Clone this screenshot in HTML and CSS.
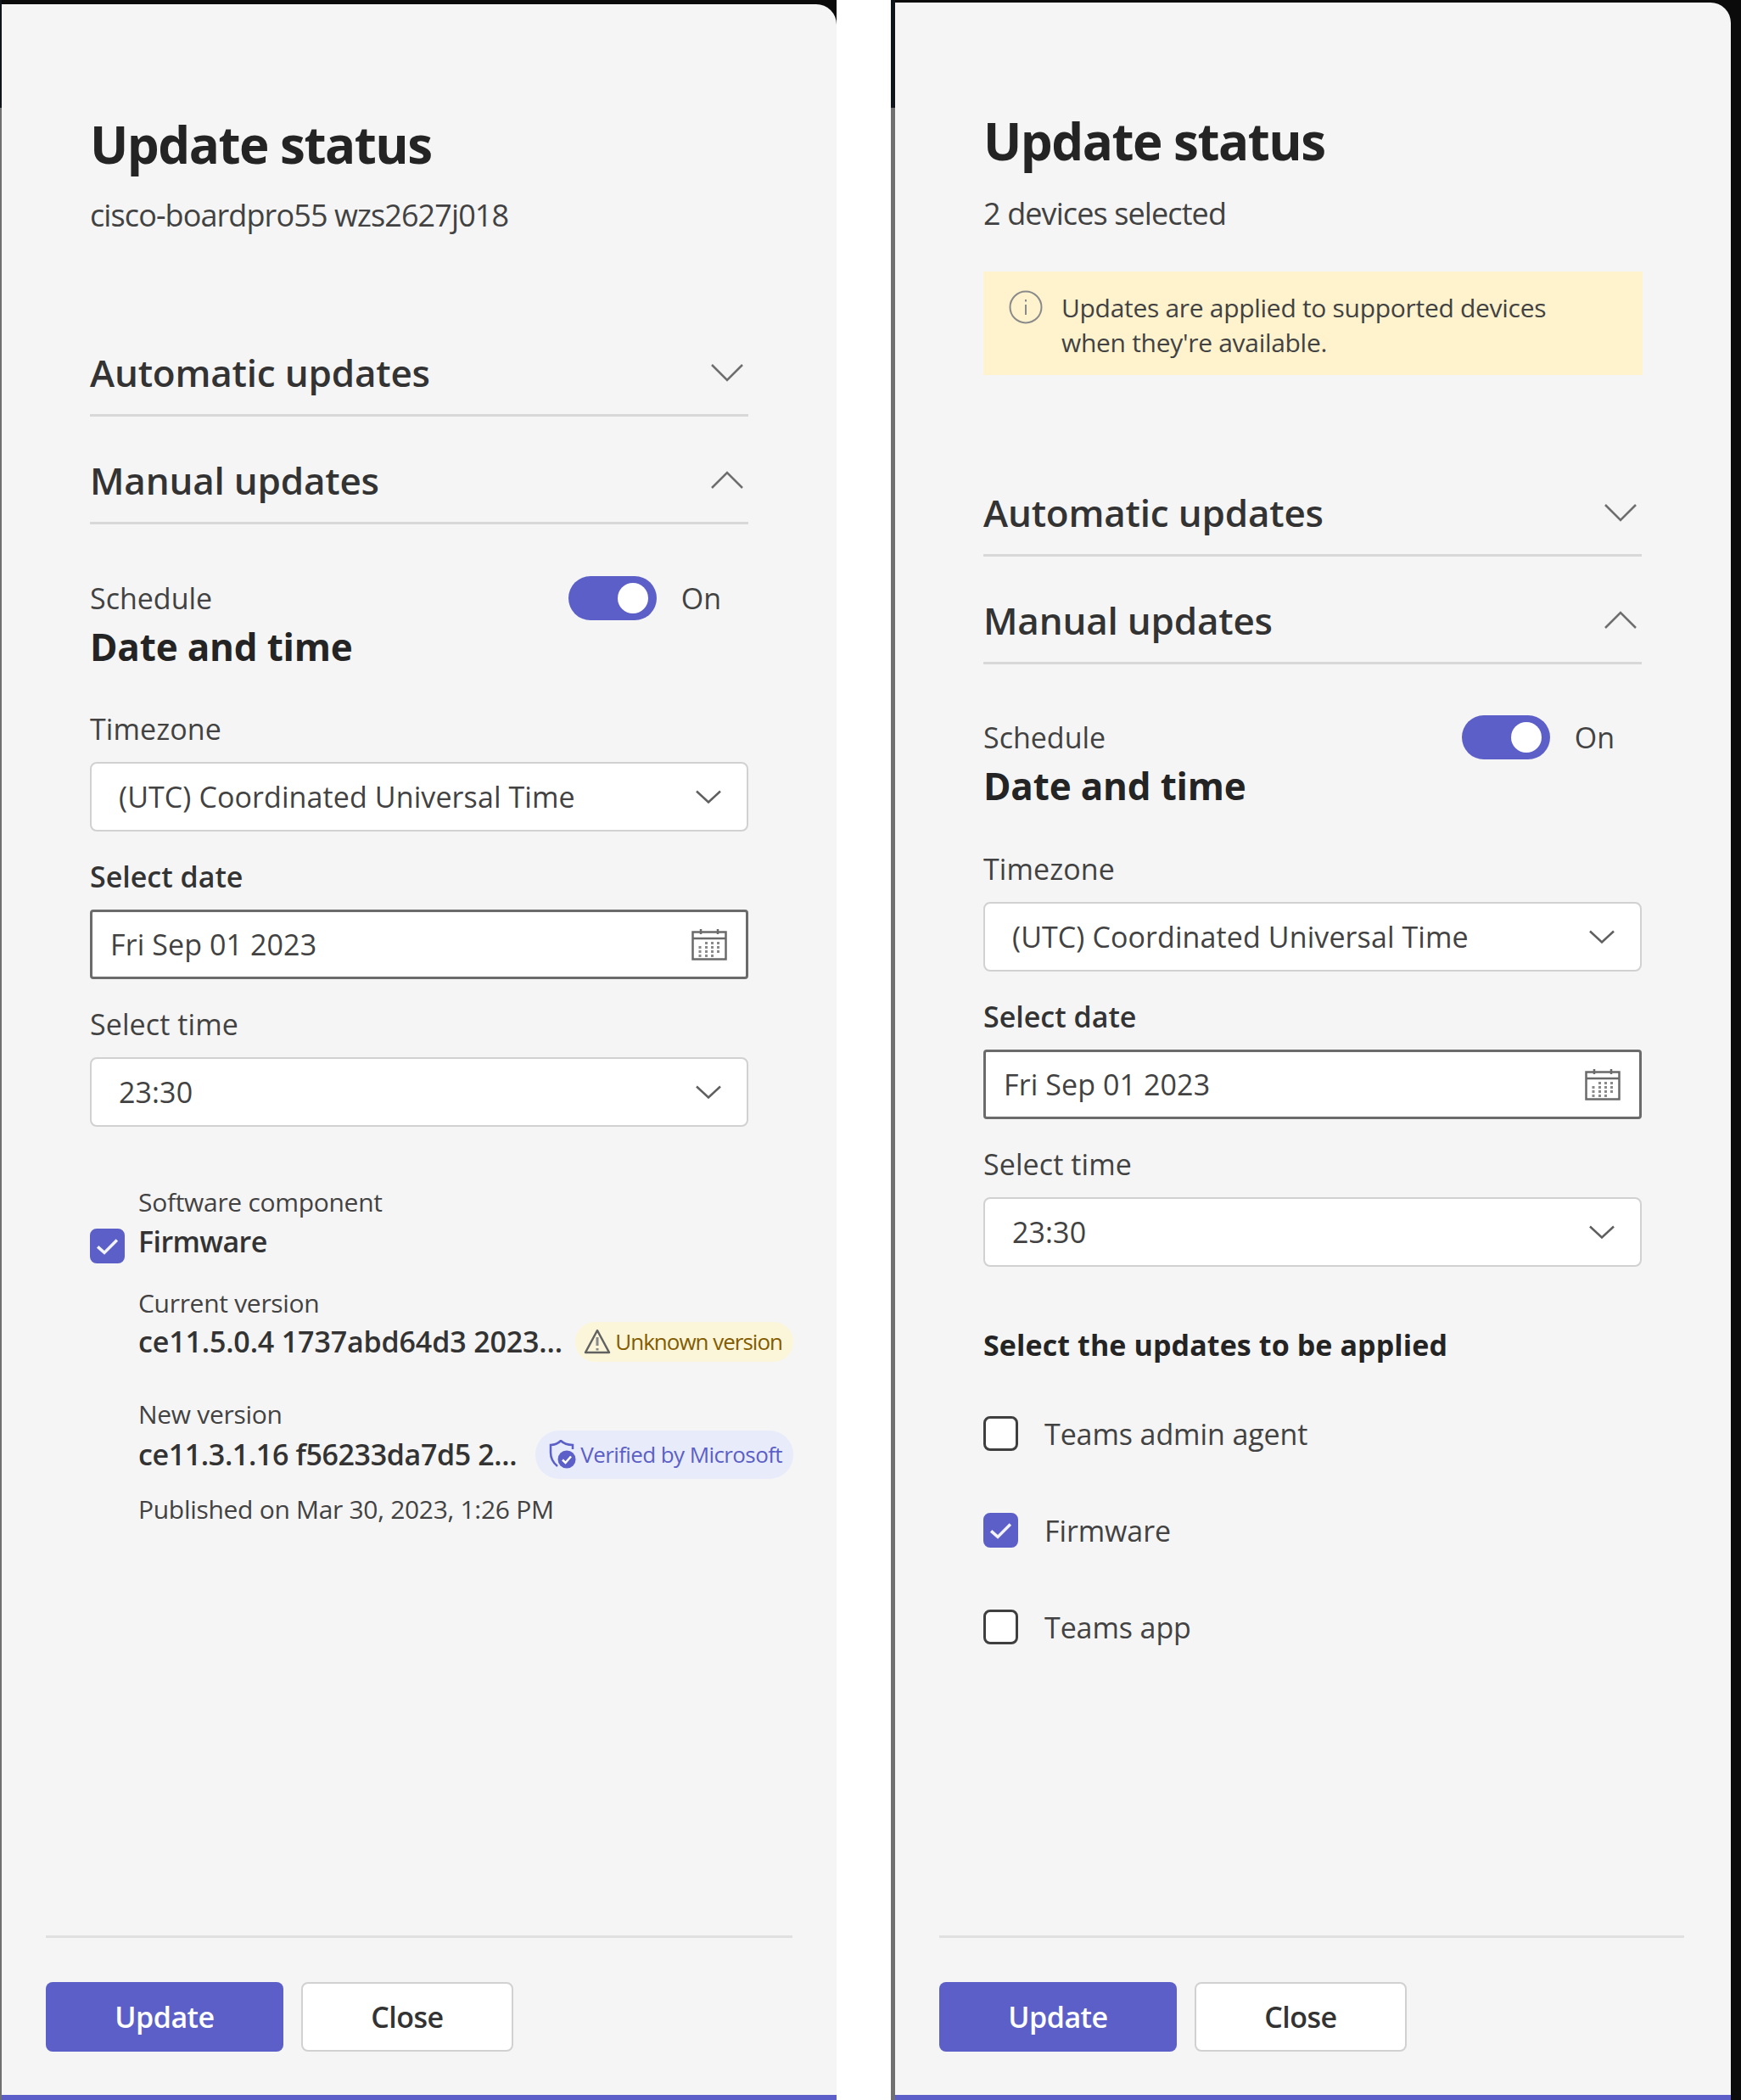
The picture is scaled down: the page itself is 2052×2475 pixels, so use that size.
FILE: index.html
```html
<!DOCTYPE html>
<html lang="en">
<head>
<meta charset="utf-8">
<title>Update status</title>
<link rel="stylesheet" href="styles.css">
</head>
<body>
<main class="stage">
  <section class="panel panel-left">
    <span class="edge"></span>
    <div class="sheet">
      <h1 class="title">Update status</h1>
      <p class="subtitle">cisco-boardpro55 wzs2627j018</p>
      <div class="accordion accordion-left">
        <div class="acc-row"><h2 class="acc-title">Automatic updates</h2><svg class="acc-icon" viewBox="0 0 40 24"><path d="M2 3 20 21 38 3"/></svg></div>
        <div class="acc-row"><h2 class="acc-title">Manual updates</h2><svg class="acc-icon" viewBox="0 0 40 24"><path d="M2 21 20 3 38 21"/></svg></div>
      </div>
      <div class="schedule">
        <div class="schedule-head"><span class="label">Schedule</span><span class="toggle"><span class="knob"></span></span><span class="on">On</span></div>
        <h3 class="date-title">Date and time</h3>
      </div>
      <div class="label field-label first">Timezone</div>
      <div class="select"><span>(UTC) Coordinated Universal Time</span><svg class="sel-icon" viewBox="0 0 30 16"><path d="M1 1.500 15 14.500 29 1.500"/></svg></div>
      <div class="label field-label strong">Select date</div>
      <div class="select date"><span>Fri Sep 01 2023</span><svg class="cal-icon" viewBox="0 0 42 38"><path class="cal-line" d="M1.500 4.500h39v32h-39zM1.500 12h39M11 1v6M31 1v6"/><path class="cal-dots" d="M16 16h3v3h-3zM23 16h3v3h-3zM30 16h3v3h-3zM8.500 21h3v3h-3zM16 21h3v3h-3zM23 21h3v3h-3zM30 21h3v3h-3zM8.500 26h3v3h-3zM16 26h3v3h-3zM23 26h3v3h-3zM30 26h3v3h-3zM8.500 31h3v3h-3zM16 31h3v3h-3zM23 31h3v3h-3z"/></svg></div>
      <div class="label field-label">Select time</div>
      <div class="select"><span>23:30</span><svg class="sel-icon" viewBox="0 0 30 16"><path d="M1 1.500 15 14.500 29 1.500"/></svg></div>
      <div class="component">
        <span class="check checked check-firm"><svg viewBox="0 0 20 20"><path d="M3.500 10.500 8 14.500 16.500 6"/></svg></span>
        <div class="comp-body">
          <div class="small">Software component</div>
          <div class="firm">Firmware</div>
          <div class="small ver-label">Current version</div>
          <div class="ver-row"><span class="ver">ce11.5.0.4 1737abd64d3 2023...</span><span class="pill pill-warn"><svg class="pill-icon" viewBox="0 0 32 30"><path class="warn-tri" d="M16 2 30 28H2Z"/><path class="warn-mark" d="M16 10v10M16 23v2.500"/></svg>Unknown version</span></div>
          <div class="small ver-label new">New version</div>
          <div class="ver-row new-row"><span class="ver">ce11.3.1.16 f56233da7d5 2...</span><span class="pill pill-ok"><svg class="pill-icon shield" viewBox="0 0 32 34"><path class="shield-line" d="M10 31C5 27 2 22 2 15V6C7 6 11 4 14 1 17 4 22 6 28 6V11"/><circle cx="21" cy="23" r="10.500"/><path class="shield-check" d="M16 23.500 19.500 27 26 19.500"/></svg>Verified by Microsoft</span></div>
          <div class="small published">Published on Mar 30, 2023, 1:26 PM</div>
        </div>
      </div>
      <footer class="footer"><button class="btn btn-primary">Update</button><button class="btn btn-second">Close</button></footer>
    </div>
  </section>

  <section class="panel panel-right">
    <span class="edge"></span>
    <div class="sheet">
      <h1 class="title">Update status</h1>
      <p class="subtitle">2 devices selected</p>
      <div class="banner">
        <svg class="info" viewBox="0 0 40 40"><circle cx="20" cy="20" r="18.500"/><path d="M20 17v12M20 11v2.500"/></svg>
        <p class="banner-text">Updates are applied to supported devices<br>when they're available.</p>
      </div>
      <div class="accordion accordion-right">
        <div class="acc-row"><h2 class="acc-title">Automatic updates</h2><svg class="acc-icon" viewBox="0 0 40 24"><path d="M2 3 20 21 38 3"/></svg></div>
        <div class="acc-row"><h2 class="acc-title">Manual updates</h2><svg class="acc-icon" viewBox="0 0 40 24"><path d="M2 21 20 3 38 21"/></svg></div>
      </div>
      <div class="schedule">
        <div class="schedule-head"><span class="label">Schedule</span><span class="toggle"><span class="knob"></span></span><span class="on">On</span></div>
        <h3 class="date-title">Date and time</h3>
      </div>
      <div class="label field-label first">Timezone</div>
      <div class="select"><span>(UTC) Coordinated Universal Time</span><svg class="sel-icon" viewBox="0 0 30 16"><path d="M1 1.500 15 14.500 29 1.500"/></svg></div>
      <div class="label field-label strong">Select date</div>
      <div class="select date"><span>Fri Sep 01 2023</span><svg class="cal-icon" viewBox="0 0 42 38"><path class="cal-line" d="M1.500 4.500h39v32h-39zM1.500 12h39M11 1v6M31 1v6"/><path class="cal-dots" d="M16 16h3v3h-3zM23 16h3v3h-3zM30 16h3v3h-3zM8.500 21h3v3h-3zM16 21h3v3h-3zM23 21h3v3h-3zM30 21h3v3h-3zM8.500 26h3v3h-3zM16 26h3v3h-3zM23 26h3v3h-3zM30 26h3v3h-3zM8.500 31h3v3h-3zM16 31h3v3h-3zM23 31h3v3h-3z"/></svg></div>
      <div class="label field-label">Select time</div>
      <div class="select"><span>23:30</span><svg class="sel-icon" viewBox="0 0 30 16"><path d="M1 1.500 15 14.500 29 1.500"/></svg></div>
      <h3 class="apply-title">Select the updates to be applied</h3>
      <ul class="apply-list">
        <li class="apply-item"><span class="check"></span>Teams admin agent</li>
        <li class="apply-item"><span class="check checked"><svg viewBox="0 0 20 20"><path d="M3.500 10.500 8 14.500 16.500 6"/></svg></span>Firmware</li>
        <li class="apply-item"><span class="check"></span>Teams app</li>
      </ul>
      <footer class="footer"><button class="btn btn-primary">Update</button><button class="btn btn-second">Close</button></footer>
    </div>
  </section>
</main>
</body>
</html>
```
FILE: styles.css
```css
* { box-sizing: border-box; }
html, body { margin: 0; padding: 0; background: #fff; }
body { font-family: "Open Sans", "Noto Sans", sans-serif; color: #242424; }
h1, h2, h3, p, ul { margin: 0; padding: 0; }
ul { list-style: none; }

.stage { display: flex; width: 2052px; height: 2475px; }
.panel { position: relative; height: 2475px; background: #0b0b0b; border-left: 3px solid #707070; display: flex; flex-direction: column; }
.panel-left { width: 986px; padding-top: 5px; margin-right: 64px; border-left-width: 2px; }
.panel-right { width: 1002px; padding: 3px 12px 0 0; border-left-width: 5px; }
.edge { position: absolute; left: -4px; top: 0; width: 4px; height: 127px; background: #10151c; }
.panel-right .edge { left: -5px; width: 5px; }
.sheet { flex: 1; background: #f5f5f5; border-radius: 0 24px 0 0; border-bottom: 6px solid #5b5fc7; display: flex; flex-direction: column; padding: 0 104px; }

.title { font-size: 60px; font-weight: 700; line-height: 56px; letter-spacing: -1.5px; margin-top: 137px; color: #242424; }
.panel-right .title { margin-top: 135px; }
.subtitle { font-size: 36px; line-height: 44px; letter-spacing: -0.9px; margin-top: 34px; color: #424242; }
.panel-right .subtitle { margin-top: 36px; }

.banner { display: flex; align-items: flex-start; gap: 22px; width: 777px; height: 122px; background: #fff3ce; margin-top: 46px; padding: 22px 30px; }
.info { width: 40px; height: 40px; flex: none; fill: none; stroke: #8a8a8a; stroke-width: 2; }
.banner-text { font-size: 30px; line-height: 41px; letter-spacing: -0.3px; color: #424242; }

.accordion { width: 776px; }
.accordion-left { margin-top: 88px; }
.accordion-right { margin-top: 87px; }
.acc-row { display: flex; justify-content: space-between; align-items: center; height: 127px; padding: 26px 5px 0 0; border-bottom: 3px solid #d8d8d8; }
.acc-title { font-size: 44px; font-weight: 600; line-height: 56px; letter-spacing: -0.2px; color: #333; }
.acc-icon { width: 40px; height: 24px; fill: none; stroke: #6e6e6e; stroke-width: 2.500; }

.schedule { width: 776px; margin-top: 61px; }
.panel-right .schedule { margin-top: 60px; }
.schedule-head { display: flex; align-items: center; height: 52px; }
.label { font-size: 34px; line-height: 44px; letter-spacing: 0; color: #424242; }
.schedule-head .label { flex: 1; }
.toggle { position: relative; width: 104px; height: 52px; border-radius: 26px; background: #5b5fc7; }
.knob { position: absolute; top: 8px; right: 10px; width: 36px; height: 36px; border-radius: 50%; background: #fff; }
.on { font-size: 34px; color: #424242; margin-left: 29px; margin-right: 32px; line-height: 44px; }
.date-title { font-size: 44px; font-weight: 700; line-height: 56px; letter-spacing: -0.2px; color: #242424; margin-top: 3px; }

.field-label { margin-top: 31px; height: 44px; letter-spacing: 0.1px; }
.field-label.first { margin-top: 47px; }
.panel-right .field-label.first { margin-top: 48px; }
.field-label.strong { font-weight: 600; letter-spacing: 0; color: #333; margin-top: 31px; }
.select { display: flex; align-items: center; justify-content: space-between; width: 776px; height: 82px; margin-top: 17px; padding: 0 30px 0 32px; background: #fff; border: 2px solid #d1d1d1; border-radius: 8px; font-size: 34px; letter-spacing: 0.1px; color: #424242; }
.select.date { border: 3px solid #6b6b6b; border-radius: 4px; padding: 0 22px 0 21px; }
.sel-icon { width: 30px; height: 16px; fill: none; stroke: #5f5f5f; stroke-width: 2.500; }
.cal-icon { width: 42px; height: 38px; }
.cal-line { fill: none; stroke: #6a6a6a; stroke-width: 2.500; }
.cal-dots { fill: #8a8a8a; }

.component { position: relative; margin-top: 68px; padding-left: 57px; }
.check { display: inline-flex; flex: none; width: 41px; height: 41px; border-radius: 8px; border: 3px solid #3f3f3f; background: #fff; }
.check.checked { background: #5b5fc7; border-color: #5b5fc7; }
.check svg { width: 100%; height: 100%; fill: none; stroke: #f3f3fb; stroke-width: 2; }
.check-firm { position: absolute; left: 0; top: 52px; }
.small { font-size: 30px; line-height: 41px; letter-spacing: -0.3px; color: #424242; }
.firm { font-size: 34px; font-weight: 600; line-height: 48px; letter-spacing: -0.6px; color: #333; margin-top: 2px; }
.ver-label { margin-top: 28px; }
.ver-label.new { margin-top: 39px; }
.ver-row { display: flex; justify-content: space-between; align-items: center; width: 772px; height: 52px; margin-top: -1px; }
.ver-row.new-row { margin-top: 1px; }
.ver { font-size: 34px; font-weight: 600; letter-spacing: -0.15px; color: #333; white-space: nowrap; }
.new-row .ver { letter-spacing: -0.37px; }
.pill { display: inline-flex; align-items: center; height: 47px; border-radius: 23px; font-size: 26px; letter-spacing: -1px; white-space: nowrap; padding: 0 13px 0 10px; }
.pill-warn { background: #fbf6d9; color: #835b00; }
.pill-ok { height: 57px; border-radius: 28px; background: #e8ebfa; color: #5b5fc7; padding-left: 16px; letter-spacing: -0.6px; }
.pill-icon { width: 32px; height: 30px; flex: none; margin-right: 5px; fill: none; stroke: #616161; stroke-width: 2; }
.warn-tri { stroke-linejoin: round; stroke-width: 2.500; }
.warn-mark { stroke: #8a8a8a; stroke-width: 3; }
.shield { height: 34px; }
.shield circle { fill: #5b5fc7; stroke: none; }
.shield-line { stroke: #5b5fc7; stroke-width: 2.500; }
.shield-check { stroke: #fff; stroke-width: 2.500; }
.published { margin-top: 18px; }

.apply-title { font-size: 34px; font-weight: 700; line-height: 48px; letter-spacing: 0.1px; color: #242424; margin-top: 68px; }
.apply-list { margin-top: 60px; display: flex; flex-direction: column; gap: 73px; }
.apply-item { display: flex; align-items: center; gap: 31px; height: 41px; font-size: 34px; letter-spacing: -0.1px; color: #424242; }

.footer { display: flex; gap: 21px; margin: auto -52px 51px; padding-top: 52px; border-top: 3px solid #e0e0e0; }
.panel-right .footer { margin-right: -49px; }
.btn { height: 82px; border-radius: 8px; font-family: inherit; font-size: 34px; font-weight: 600; letter-spacing: -0.5px; cursor: pointer; }
.btn-primary { width: 280px; background: #5b5fc7; color: #fff; border: none; }
.btn-second { width: 250px; background: #fff; color: #333; border: 2px solid #d1d1d1; }
```
